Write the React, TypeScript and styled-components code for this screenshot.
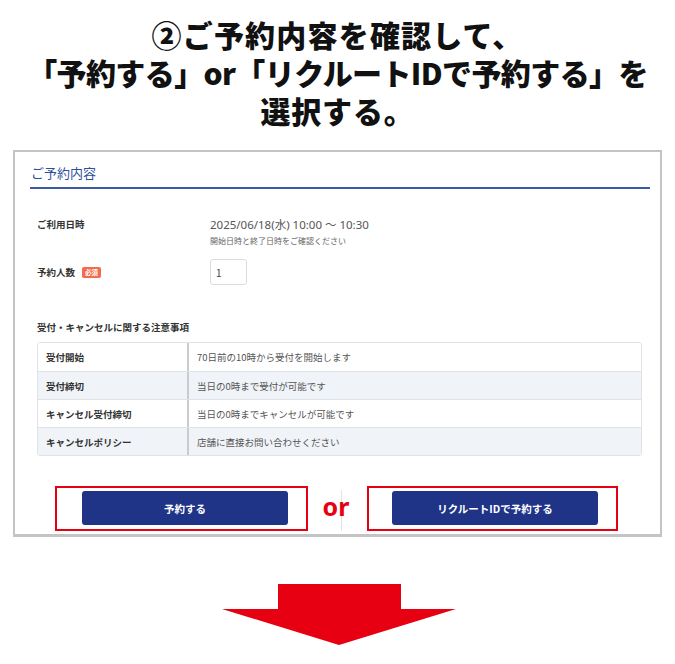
import React from "react";
import styled, { createGlobalStyle } from "styled-components";

const Global = createGlobalStyle`
  html, body { margin: 0; padding: 0; background: #ffffff; }
  body { font-family: "Noto Sans CJK JP", "Noto Sans", sans-serif; color: #333; }
  * { box-sizing: border-box; }
`;

const Page = styled.div`
  width: 675px;
  display: flex;
  flex-direction: column;
  align-items: center;
  padding-top: 15px;
`;

const Title = styled.h1`
  margin: 0;
  font-family: "Noto Sans CJK JP", sans-serif;
  font-weight: 900;
  font-size: 30px;
  line-height: 38px;
  color: #111;
  text-align: center;
`;

const TitleLine = styled.span<{ $spacing: number }>`
  display: block;
  letter-spacing: ${(p) => p.$spacing}px;
`;

const Panel = styled.section`
  margin-top: 21px;
  width: 649px;
  border: 2px solid #c4c4c4;
  border-bottom-width: 3px;
  padding: 0 0 3px;
  background: #fff;
`;

const Heading = styled.h2`
  margin: 0 10px 0 15px;
  padding: 12px 0 5px 1px;
  font-size: 13px;
  line-height: 18px;
  font-weight: 400;
  color: #2d4f9e;
  border-bottom: 2px solid #3d5aa6;
`;

const Body = styled.div`
  padding: 0 18px 0 22px;
  display: flex;
  flex-direction: column;
`;

const FormRow = styled.div<{ $top: number; $center?: boolean }>`
  margin-top: ${(p) => p.$top}px;
  display: flex;
  align-items: ${(p) => (p.$center ? "center" : "flex-start")};
`;

const Label = styled.div`
  width: 173px;
  flex-shrink: 0;
  display: flex;
  align-items: center;
  gap: 7px;
  font-size: 9.5px;
  line-height: 14px;
  font-weight: 700;
  color: #333;
`;

const Badge = styled.span`
  display: inline-flex;
  align-items: center;
  justify-content: center;
  width: 19px;
  height: 11px;
  border-radius: 2px;
  background: #f26b4c;
  color: #fff;
  font-size: 6.5px;
  font-weight: 700;
`;

const ValueCol = styled.div`
  display: flex;
  flex-direction: column;
  gap: 2px;
`;

const Value = styled.div`
  font-family: "Noto Sans", "Noto Sans CJK JP", sans-serif;
  font-size: 11.5px;
  line-height: 16px;
  color: #555;
`;

const Note = styled.div`
  font-size: 8px;
  line-height: 12px;
  color: #666;
`;

const NumberInput = styled.div`
  width: 37px;
  height: 26px;
  border: 1px solid #dcdcdc;
  border-radius: 3px;
  padding-left: 5px;
  display: flex;
  align-items: center;
  font-size: 10px;
  color: #444;
`;

const SectionTitle = styled.div`
  margin-top: 35px;
  font-size: 9.5px;
  line-height: 14px;
  font-weight: 700;
  color: #333;
`;

const Table = styled.div`
  margin-top: 8px;
  border: 1px solid #dfe2e7;
  border-radius: 3px;
  overflow: hidden;
`;

const TRow = styled.div<{ $alt: boolean }>`
  display: grid;
  grid-template-columns: 151px 1fr;
  height: 28px;
  background: ${(p) => (p.$alt ? "#f0f3f8" : "#ffffff")};
  & + & { border-top: 1px solid #dfe2e7; }
`;

const TLabel = styled.div`
  display: flex;
  align-items: center;
  padding-left: 8px;
  border-right: 2px solid #c9cbcf;
  font-size: 9.5px;
  font-weight: 700;
  color: #333;
`;

const TValue = styled.div`
  display: flex;
  align-items: center;
  padding-left: 8px;
  font-size: 9.5px;
  color: #555;
`;

const ButtonRow = styled.div`
  margin-top: 30px;
  display: flex;
  justify-content: center;
  padding-right: 2px;
`;

const RedBox = styled.div<{ $w: number; $pl: number }>`
  width: ${(p) => p.$w}px;
  height: 45px;
  border: 2px solid #e60012;
  padding: 3px 18px 4px ${(p) => p.$pl}px;
  display: flex;
`;

const NavyButton = styled.button`
  flex: 1;
  border: none;
  border-radius: 3px;
  background: #1f3387;
  color: #fff;
  font-family: "Noto Sans CJK JP", sans-serif;
  font-size: 10.5px;
  font-weight: 700;
  cursor: pointer;
`;

const OrCell = styled.div`
  position: relative;
  width: 59px;
  display: flex;
  align-items: center;
  justify-content: center;
  padding-right: 3px;
`;

const OrLine = styled.span`
  position: absolute;
  left: 33px;
  top: 4px;
  bottom: 0;
  width: 1px;
  background: #e2e2e2;
`;

const OrText = styled.span`
  position: relative;
  font-family: "Noto Sans", "Open Sans", sans-serif;
  font-weight: 700;
  font-size: 25px;
  line-height: 1;
  color: #e60012;
  margin-top: -4px;
`;

const ArrowWrap = styled.div`
  margin-top: 47px;
  padding-left: 2px;
  display: flex;
  justify-content: center;
`;

const rows = [
  ["受付開始", "70日前の10時から受付を開始します"],
  ["受付締切", "当日の0時まで受付が可能です"],
  ["キャンセル受付締切", "当日の0時までキャンセルが可能です"],
  ["キャンセルポリシー", "店舗に直接お問い合わせください"],
];

export default function App() {
  return (
    <>
      <Global />
      <Page>
        <Title>
          <TitleLine $spacing={1.2}>②ご予約内容を確認して、</TitleLine>
          <TitleLine $spacing={-0.6}>「予約する」or「リクルートIDで予約する」を</TitleLine>
          <TitleLine $spacing={0.8}>選択する。</TitleLine>
        </Title>
        <Panel>
          <Heading>ご予約内容</Heading>
          <Body>
            <FormRow $top={28}>
              <Label>ご利用日時</Label>
              <ValueCol>
                <Value>2025/06/18(水) 10:00 〜 10:30</Value>
                <Note>開始日時と終了日時をご確認ください</Note>
              </ValueCol>
            </FormRow>
            <FormRow $top={12} $center>
              <Label>
                予約人数<Badge>必須</Badge>
              </Label>
              <NumberInput>1</NumberInput>
            </FormRow>
            <SectionTitle>受付・キャンセルに関する注意事項</SectionTitle>
            <Table>
              {rows.map(([l, v], i) => (
                <TRow key={l} $alt={i % 2 === 1}>
                  <TLabel>{l}</TLabel>
                  <TValue>{v}</TValue>
                </TRow>
              ))}
            </Table>
          </Body>
          <ButtonRow>
            <RedBox $w={253} $pl={25}>
              <NavyButton>予約する</NavyButton>
            </RedBox>
            <OrCell>
              <OrLine />
              <OrText>or</OrText>
            </OrCell>
            <RedBox $w={251} $pl={23}>
              <NavyButton>リクルートIDで予約する</NavyButton>
            </RedBox>
          </ButtonRow>
        </Panel>
        <ArrowWrap>
          <svg width="234" height="61" viewBox="0 0 234 61">
            <polygon
              points="56,0 179,0 179,25 234,25 117,61 0,25 56,25"
              fill="#e60012"
            />
          </svg>
        </ArrowWrap>
      </Page>
    </>
  );
}
